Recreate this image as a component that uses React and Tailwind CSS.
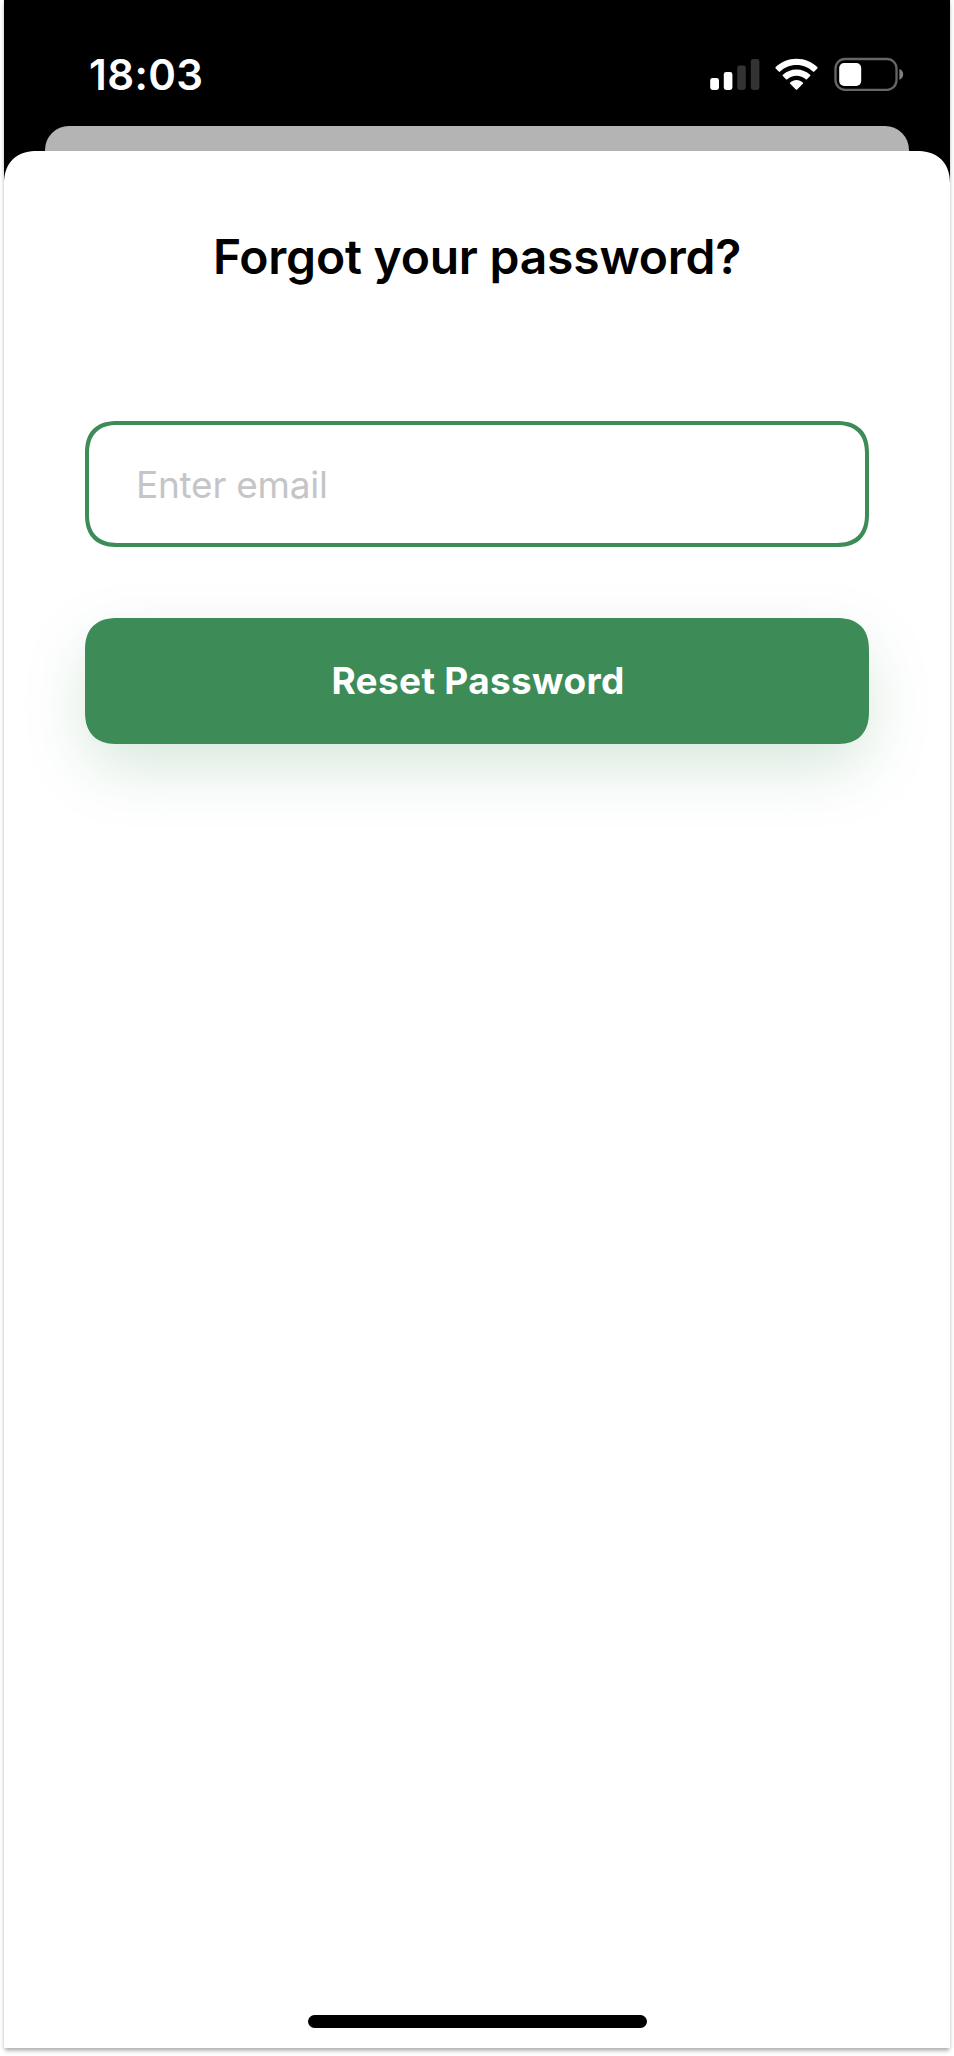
function SignalIcon() {
  return (
    <svg className="h-8 w-[50px]" viewBox="0 0 50 32" fill="none">
      <rect x="0.2" y="20" width="8.8" height="12" rx="2.4" fill="#fff" />
      <rect x="13.8" y="14" width="8.6" height="18" rx="2.4" fill="#fff" />
      <rect x="27.2" y="7.5" width="8.6" height="24.5" rx="2.4" fill="#333" />
      <rect x="40.8" y="1" width="8.6" height="31" rx="2.4" fill="#333" />
    </svg>
  );
}

function WifiIcon() {
  return (
    <svg className="h-8 w-[43px]" viewBox="0 0 43 32" fill="#fff">
      <path d="M21.5.7C29.700.7 37.100 3.900 42.300 9.100a.9.9 0 0 1 0 1.300L39.300 13.600a.9.9 0 0 1-1.300 0C33.700 9.500 27.900 7 21.500 7S9.300 9.500 5 13.600a.9.9 0 0 1-1.300 0L.7 10.400a.9.9 0 0 1 0-1.300C5.900 3.900 13.300.7 21.500.7Z" />
      <path d="M21.500 11.500c5.200 0 10 2 13.600 5.200a.9.9 0 0 1 0 1.400l-3.100 3.100a.9.9 0 0 1-1.300 0c-2.500-2.100-5.700-3.400-9.200-3.400s-6.700 1.300-9.200 3.400a.9.9 0 0 1-1.300 0L7.900 18.100a.9.9 0 0 1 0-1.400C11.500 13.500 16.300 11.500 21.500 11.500Z" />
      <path d="M21.500 22c2.400 0 4.600.9 6.300 2.400a.9.9 0 0 1 0 1.400l-5.600 5.600a1 1 0 0 1-1.400 0l-5.600-5.600a.9.9 0 0 1 0-1.400C16.900 22.900 19.100 22 21.500 22Z" />
    </svg>
  );
}

function BatteryIcon() {
  return (
    <svg className="h-[34px] w-[70px]" viewBox="0 0 70 34" fill="none">
      <rect x="1.500" y="2" width="61" height="30.800" rx="9.500" stroke="#666" strokeWidth="2.300" />
      <rect x="5.200" y="6" width="22" height="23" rx="5" fill="#fff" />
      <path d="M65.400 12c2.200.8 3.800 2.900 3.800 5.400s-1.600 4.600-3.800 5.400Z" fill="#808080" />
    </svg>
  );
}

function StatusBar() {
  return (
    <div className="flex h-[126px] items-start justify-between pr-[46px] pl-[85px] pt-[50px]">
      <time className="text-[42px] leading-[50px] font-semibold tracking-[0.4px] text-white">18:03</time>
      <div className="flex items-center pt-[7px]">
        <SignalIcon />
        <div className="w-[15px]" />
        <WifiIcon />
        <div className="w-[16px]" />
        <BatteryIcon />
      </div>
    </div>
  );
}

export default function App() {
  return (
    <div className="flex h-[2056px] w-[954px] flex-col overflow-hidden bg-white px-1 font-['Inter',sans-serif]">
      <main className="flex h-[2048px] shrink-0 flex-col bg-[linear-gradient(#000_190px,#fff_190px)] shadow-[0_0_4px_rgba(0,0,0,0.16),0_4px_4px_-1px_rgba(0,0,0,0.26)]">
        <StatusBar />
        <div className="mx-[41px] h-[25px] shrink-0 rounded-t-[24px] bg-[#b4b4b4]" />
        <section className="flex flex-1 flex-col items-center rounded-t-[28px] bg-white px-[81px] supports-[corner-shape:squircle]:rounded-t-[33px] supports-[corner-shape:squircle]:[corner-shape:superellipse(1.2)]">
          <h1 className="mt-[76px] whitespace-nowrap text-[48px] leading-[60px] font-semibold tracking-[-0.22px] text-black">
            Forgot your password?
          </h1>
          <input
            type="email"
            placeholder="Enter email"
            className="mt-[134px] h-[126px] w-full rounded-[28px] border-4 border-[#3d8b57] bg-white pl-[47px] text-[37px] tracking-[-0.25px] text-black outline-none placeholder:text-[#c5c5c7] supports-[corner-shape:squircle]:rounded-[33px] supports-[corner-shape:squircle]:[corner-shape:superellipse(1.3)]"
          />
          <button
            type="button"
            className="mt-[71px] h-[126px] w-full rounded-[28px] bg-[#3d8b57] pl-0.5 text-[37px] font-bold tracking-[0.33px] text-white shadow-[0_24px_64px_-4px_rgba(61,139,87,0.22)] supports-[corner-shape:squircle]:rounded-[33px] supports-[corner-shape:squircle]:[corner-shape:superellipse(1.3)]"
          >
            Reset Password
          </button>
          <div className="mt-auto mb-5 h-[13px] w-[339px] rounded-full bg-black" />
        </section>
      </main>
    </div>
  );
}
